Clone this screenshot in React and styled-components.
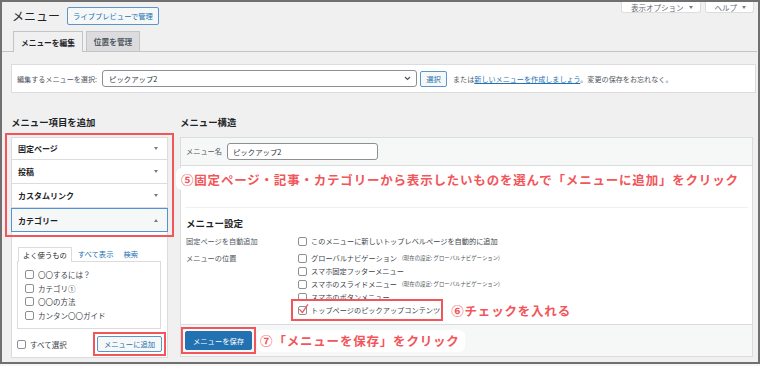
import styled, { createGlobalStyle } from "styled-components";

const RED = "#f2555a";
const BLUE = "#2271b1";

const GlobalStyle = createGlobalStyle`
  html, body { margin: 0; padding: 0; background: #f6f6f6; }
  body {
    font-family: "Noto Sans CJK JP", "Noto Sans", sans-serif;
    color: #3c434a;
  }
  * { box-sizing: border-box; }
`;

const App = () => {
    return (
        <Frame>
            <GlobalStyle />
            {/* Header */}
            <Header>
                <TitleGroup>
                    <Title>メニュー</Title>
                    <OutlineButton width="92px">ライブプレビューで管理</OutlineButton>
                </TitleGroup>
                <MetaBar>
                    <MetaTab>表示オプション<Caret /></MetaTab>
                    <MetaTab>ヘルプ<Caret /></MetaTab>
                </MetaBar>
            </Header>

            {/* Tabs */}
            <TabBar>
                <Tab active>メニューを編集</Tab>
                <Tab>位置を管理</Tab>
            </TabBar>

            {/* Select menu */}
            <SelectPanel>
                <span>編集するメニューを選択:</span>
                <SelectBox>
                    ピックアップ2
                    <svg width="7" height="5" viewBox="0 0 7 5">
                        <path d="M1 1 L3.5 3.5 L6 1" fill="none" stroke="#50575e" strokeWidth="1.2" />
                    </svg>
                </SelectBox>
                <OutlineButton width="27px" height="16px">選択</OutlineButton>
                <Note>
                    または<Link>新しいメニューを作成しましょう</Link>。変更の保存をお忘れなく。
                </Note>
            </SelectPanel>

            <Columns>
                {/* Left column */}
                <div>
                    <ColHeading>メニュー項目を追加</ColHeading>
                    <AccordionWrap>
                        <Section first>固定ページ<Arrow /></Section>
                        <Section>投稿<Arrow /></Section>
                        <Section>カスタムリンク<Arrow /></Section>
                        <Section open>カテゴリー<Arrow up /></Section>
                        <Highlight />
                    </AccordionWrap>
                    <CatBody>
                        <CatTabs>
                            <CatTab>よく使うもの</CatTab>
                            <CatLink gap="6px">すべて表示</CatLink>
                            <CatLink gap="10px">検索</CatLink>
                        </CatTabs>
                        <ListBox>
                            <ListItem><Checkbox />〇〇するには？</ListItem>
                            <ListItem><Checkbox />カテゴリ①</ListItem>
                            <ListItem><Checkbox />〇〇の方法</ListItem>
                            <ListItem><Checkbox />カンタン〇〇ガイド</ListItem>
                        </ListBox>
                        <CatFooter>
                            <ListItem><Checkbox />すべて選択</ListItem>
                            <RedBox>
                                <OutlineButton width="65px" height="16px">メニューに追加</OutlineButton>
                            </RedBox>
                        </CatFooter>
                    </CatBody>
                </div>

                {/* Right column */}
                <div>
                    <ColHeading>メニュー構造</ColHeading>
                    <Panel>
                        <PanelHeader>
                            <Label>メニュー名</Label>
                            <TextInput>ピックアップ2</TextInput>
                        </PanelHeader>
                        <PanelBody>
                            <DropArea>
                                <Callout wide>⑤固定ページ・記事・カテゴリーから表示したいものを選んで「メニューに追加」をクリック</Callout>
                            </DropArea>
                            <Settings>
                                <SettingsHeading>メニュー設定</SettingsHeading>
                                <SettingRow>
                                    <Label>固定ページを自動追加</Label>
                                    <Options>
                                        <Option><Checkbox />このメニューに新しいトップレベルページを自動的に追加</Option>
                                    </Options>
                                </SettingRow>
                                <SettingRow gap="4px">
                                    <Label>メニューの位置</Label>
                                    <Options>
                                        <Option><Checkbox />グローバルナビゲーション<Small>(現在の設定: グローバルナビゲーション)</Small></Option>
                                        <Option><Checkbox />スマホ固定フッターメニュー</Option>
                                        <Option><Checkbox />スマホのスライドメニュー<Small>(現在の設定: グローバルナビゲーション)</Small></Option>
                                        <Option><Checkbox />スマホのボタンメニュー</Option>
                                        <HighlightLine>
                                            <HighlightBox>
                                                <Option>
                                                    <Checkbox>
                                                        <svg width="11" height="11" viewBox="0 0 11 11">
                                                            <path d="M1.8 5.6 L4.3 8.6 L9.6 0.8" fill="none" stroke={RED} strokeWidth="1.3" strokeLinecap="round" strokeLinejoin="round" />
                                                        </svg>
                                                    </Checkbox>
                                                    トップページのピックアップコンテンツ
                                                </Option>
                                            </HighlightBox>
                                            <Callout>⑥チェックを入れる</Callout>
                                        </HighlightLine>
                                    </Options>
                                </SettingRow>
                            </Settings>
                        </PanelBody>
                        <PanelFooter>
                            <RedBox>
                                <SaveButton>メニューを保存</SaveButton>
                            </RedBox>
                            <Callout boxed>⑦「メニューを保存」をクリック</Callout>
                        </PanelFooter>
                    </Panel>
                </div>
            </Columns>
        </Frame>
    );
};

export default App;

// Styled Components
const Frame = styled.div`
    width: 760px;
    height: 364px;
    border: 2px solid #707070;
    background: #f0f0f1;
    padding: 0 2px 0 9px;
    overflow: hidden;
`;

const Header = styled.div`
    display: flex;
    justify-content: space-between;
    align-items: flex-start;
`;

const TitleGroup = styled.div`
    display: flex;
    align-items: center;
    gap: 7px;
    height: 18px;
    margin: 5px 0 0 1px;
`;

const Title = styled.h1`
    margin: 0;
    font-size: 12px;
    font-weight: 400;
    line-height: 18px;
    color: #1d2327;
`;

const OutlineButton = styled.button`
    width: ${(p) => p.width};
    height: ${(p) => p.height || "18px"};
    padding: 0;
    border: 1px solid #5b95cc;
    border-radius: 2px;
    background: #f6f7f7;
    color: ${BLUE};
    font-family: inherit;
    font-size: 7.3px;
    display: flex;
    align-items: center;
    justify-content: center;
    flex: none;
`;

const MetaBar = styled.div`
    display: flex;
    gap: 4px;
    margin-right: 2px;
`;

const MetaTab = styled.div`
    height: 11px;
    padding: 0 7px 0 9px;
    background: #fff;
    border: 1px solid #dcdcde;
    border-top: none;
    border-radius: 0 0 3px 3px;
    font-size: 7.5px;
    color: #646970;
    display: flex;
    align-items: center;
    gap: 5px;
`;

const Caret = styled.span`
    width: 0;
    height: 0;
    border-left: 2.5px solid transparent;
    border-right: 2.5px solid transparent;
    border-top: 3px solid #787c82;
`;

const TabBar = styled.div`
    display: flex;
    align-items: flex-end;
    gap: 3px;
    height: 21px;
    margin: 6px -1px 0 -9px;
    padding-left: 11px;
    border-bottom: 1px solid #c3c4c7;
`;

const Tab = styled.div`
    padding: 0 7px;
    border: 1px solid #c3c4c7;
    border-bottom: none;
    margin-bottom: ${(p) => (p.active ? "-1px" : "0")};
    height: ${(p) => (p.active ? "21px" : "20px")};
    background: ${(p) => (p.active ? "#f0f0f1" : "#dcdcde")};
    color: ${(p) => (p.active ? "#1d2327" : "#50575e")};
    font-size: 7.7px;
    font-weight: 700;
    display: flex;
    align-items: center;
`;

const SelectPanel = styled.div`
    margin-top: 12px;
    height: 29px;
    background: #fff;
    border: 1px solid #dcdcde;
    padding: 0 5px;
    display: flex;
    align-items: center;
    gap: 5px;
    font-size: 7.1px;
    color: #50575e;
`;

const SelectBox = styled.div`
    width: 315px;
    height: 17px;
    border: 1px solid #8c8f94;
    border-radius: 3px;
    padding: 0 5px 0 6px;
    display: flex;
    align-items: center;
    justify-content: space-between;
    color: #2c3338;
    font-size: 7.4px;
    margin-right: -2px;
`;

const Note = styled.span`
    margin-left: 1px;
`;

const Link = styled.span`
    color: ${BLUE};
    text-decoration: underline;
`;

const Columns = styled.div`
    display: grid;
    grid-template-columns: 157px 573px;
    column-gap: 12px;
    margin-top: 22px;
`;

const ColHeading = styled.h2`
    margin: 0 0 8px;
    font-size: 9.4px;
    font-weight: 700;
    line-height: 14px;
    color: #1d2327;
`;

const AccordionWrap = styled.div`
    position: relative;
`;

const Highlight = styled.div`
    position: absolute;
    top: -4px;
    left: -6px;
    right: -6px;
    bottom: -5px;
    border: 2px solid ${RED};
    pointer-events: none;
`;

const Section = styled.div`
    height: ${(p) => (p.first ? "23px" : "24px")};
    border: 1px solid ${(p) => (p.open ? "#4f94d4" : "#dcdcde")};
    border-top-width: ${(p) => (p.first || p.open ? "1px" : "0")};
    background: ${(p) => (p.open ? "#f6f7f7" : "#fff")};
    padding: 0 9px 0 6px;
    display: flex;
    align-items: center;
    justify-content: space-between;
    font-size: 8px;
    font-weight: 700;
    color: #1d2327;
`;

const Arrow = styled.span`
    width: 0;
    height: 0;
    border-left: 2.5px solid transparent;
    border-right: 2.5px solid transparent;
    ${(p) => (p.up ? "border-bottom: 3px solid #787c82;" : "border-top: 3px solid #787c82;")}
`;

const CatBody = styled.div`
    height: 126px;
    background: #fff;
    border: 1px solid #dcdcde;
    border-top: none;
    padding: 14px 6px 0 5px;
`;

const CatTabs = styled.div`
    display: flex;
    align-items: flex-end;
    height: 15px;
    font-size: 7.3px;
`;

const CatTab = styled.div`
    height: 15px;
    margin-left: 1px;
    margin-bottom: -1px;
    padding: 0 4px;
    border: 1px solid #dcdcde;
    border-bottom: none;
    background: #fff;
    color: #1d2327;
    display: flex;
    align-items: center;
    position: relative;
`;

const CatLink = styled.span`
    color: ${BLUE};
    margin-left: ${(p) => p.gap};
    line-height: 14px;
`;

const ListBox = styled.div`
    height: 68px;
    border: 1px solid #dcdcde;
    padding: 6px 7px;
`;

const ListItem = styled.div`
    height: 13.5px;
    display: flex;
    align-items: center;
    gap: 3px;
    font-size: 7.5px;
    color: #3c434a;
`;

const Checkbox = styled.span`
    width: 9px;
    height: 9px;
    border: 1px solid #8c8f94;
    border-radius: 2px;
    background: #fff;
    flex: none;
    margin-right: 1px;
    position: relative;

    svg {
        position: absolute;
        left: -1px;
        top: -3px;
    }
`;

const CatFooter = styled.div`
    display: flex;
    align-items: center;
    justify-content: space-between;
    margin: 3px -5px 0 0;
`;

const RedBox = styled.div`
    border: 2px solid ${RED};
    padding: 2px;
    display: flex;
    flex: none;
`;

const Panel = styled.div`
    height: 220px;
    background: #fff;
    border: 1px solid #dcdcde;
    display: flex;
    flex-direction: column;
`;

const PanelHeader = styled.div`
    height: 28px;
    background: #f6f7f7;
    border-bottom: 1px solid #dcdcde;
    display: flex;
    align-items: center;
    gap: 5px;
    padding-left: 5px;
    flex: none;
`;

const Label = styled.span`
    font-size: 7.2px;
    color: #50575e;
    line-height: 13px;
`;

const TextInput = styled.div`
    width: 151px;
    height: 17px;
    border: 1px solid #8c8f94;
    border-radius: 3px;
    padding-left: 5px;
    display: flex;
    align-items: center;
    background: #fff;
    font-size: 7.4px;
    color: #2c3338;
`;

const PanelBody = styled.div`
    padding: 0 4px;
`;

const DropArea = styled.div`
    height: 42px;
    padding-top: 2px;
    border-bottom: 1px solid #f0f0f1;
`;

const Callout = styled.div`
    width: fit-content;
    height: ${(p) => (p.wide || p.boxed ? "22px" : "auto")};
    margin-left: ${(p) => (p.wide ? "-9px" : p.boxed ? "1px" : "0")};
    padding: ${(p) => (p.wide ? "0 5px" : p.boxed ? "0 5px 0 3px" : "0")};
    background: #fff;
    border-radius: 6px;
    display: flex;
    align-items: center;
    color: ${RED};
    font-size: 12.5px;
    font-weight: 700;
    letter-spacing: 0.8px;
    white-space: nowrap;
`;

const Settings = styled.div`
    padding-left: 1px;
`;

const SettingsHeading = styled.h3`
    margin: 8px 0 0;
    font-size: 9.5px;
    font-weight: 700;
    line-height: 14px;
    color: #1d2327;
`;

const SettingRow = styled.div`
    display: grid;
    grid-template-columns: 112px 1fr;
    margin-top: ${(p) => p.gap || "4.5px"};
`;

const Options = styled.div`
    display: flex;
    flex-direction: column;
`;

const Option = styled.div`
    height: 13px;
    display: flex;
    align-items: center;
    gap: 3px;
    font-size: 7.2px;
    color: #3c434a;
    white-space: nowrap;
`;

const Small = styled.span`
    font-size: 5.4px;
    color: #50575e;
    margin-left: 2px;
`;

const HighlightLine = styled.div`
    display: flex;
    align-items: center;
    gap: 8px;
    margin: -4.5px 0 0 -7px;
    position: relative;
    z-index: 1;
`;

const HighlightBox = styled.div`
    border: 2px solid ${RED};
    background: #fff;
    padding: 2.5px 1px 2.5px 5px;
`;

const PanelFooter = styled.div`
    margin-top: auto;
    height: 32px;
    border-top: 1px solid #dcdcde;
    background: #f6f7f7;
    display: flex;
    align-items: center;
`;

const SaveButton = styled.button`
    height: 19px;
    padding: 0 7px;
    border: 1px solid ${BLUE};
    border-radius: 2px;
    background: ${BLUE};
    color: #fff;
    font-family: inherit;
    font-size: 7.3px;
`;
